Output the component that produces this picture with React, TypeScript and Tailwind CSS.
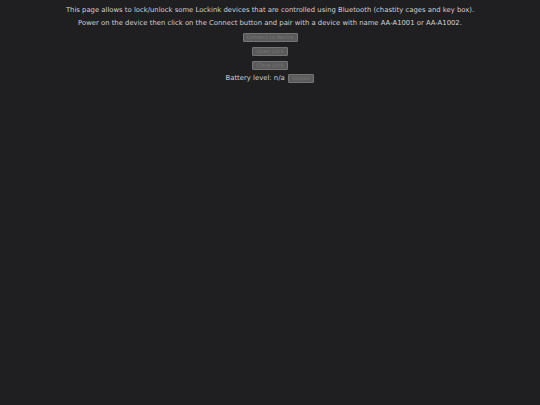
export default function App() {
  const btn =
    "rounded-[1px] border border-[#747474] bg-[#5a5a5a] px-[3px] text-[5.2px] leading-[7.5px] text-[#777777]";
  return (
    <div className="min-h-[405px] w-full bg-[#1f1f21] font-['DejaVu_Sans',sans-serif] text-[6.85px] leading-[8px] text-[#d0d0d0]">
      <div className="flex flex-col items-center pt-[6px]">
        <p>This page allows to lock/unlock some Lockink devices that are controlled using Bluetooth (chastity cages and key box).</p>
        <p className="mt-[5px]">Power on the device then click on the Connect button and pair with a device with name AA-A1001 or AA-A1002.</p>
        <button disabled className={`${btn} mt-[5.5px]`}>Connect to device</button>
        <button disabled className={`${btn} mt-[4.5px]`}>Open Lock</button>
        <button disabled className={`${btn} mt-[4.5px]`}>Close Lock</button>
        <div className="mt-[3.5px] flex items-center gap-[3px]">
          <span>Battery level: n/a</span>
          <button disabled className={btn}>Update</button>
        </div>
      </div>
    </div>
  );
}
